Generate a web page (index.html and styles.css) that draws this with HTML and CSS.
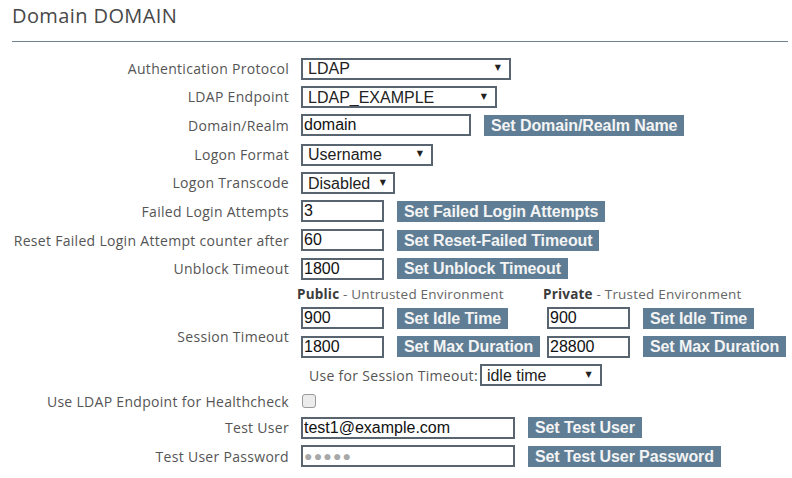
FILE: index.html
```html
<!DOCTYPE html>
<html lang="en">

<head>
    <meta charset="UTF-8">
    <title>Domain DOMAIN</title>
    <link rel="stylesheet" href="styles.css">
</head>

<body>
    <div class="page">
        <h1 class="title">Domain DOMAIN</h1>
        <hr class="rule">

        <form class="form" action="#" method="post">
            <label class="lbl" for="auth-protocol">Authentication Protocol</label>
            <div class="ctl">
                <span class="sel w-auth"><select id="auth-protocol"><option>LDAP</option></select></span>
            </div>

            <label class="lbl" for="ldap-endpoint">LDAP Endpoint</label>
            <div class="ctl">
                <span class="sel w-endpoint"><select id="ldap-endpoint"><option>LDAP_EXAMPLE</option></select></span>
            </div>

            <label class="lbl" for="realm">Domain/Realm</label>
            <div class="ctl">
                <input type="text" id="realm" class="txt w-realm" value="domain">
                <button type="button" class="btn">Set Domain/Realm Name</button>
            </div>

            <label class="lbl" for="logon-format">Logon Format</label>
            <div class="ctl">
                <span class="sel w-format"><select id="logon-format"><option>Username</option></select></span>
            </div>

            <label class="lbl" for="logon-transcode">Logon Transcode</label>
            <div class="ctl">
                <span class="sel w-transcode"><select id="logon-transcode"><option>Disabled</option></select></span>
            </div>

            <label class="lbl" for="failed-attempts">Failed Login Attempts</label>
            <div class="ctl">
                <input type="text" id="failed-attempts" class="txt w-num" value="3">
                <button type="button" class="btn">Set Failed Login Attempts</button>
            </div>

            <label class="lbl" for="reset-after">Reset Failed Login Attempt counter after</label>
            <div class="ctl">
                <input type="text" id="reset-after" class="txt w-num" value="60">
                <button type="button" class="btn">Set Reset-Failed Timeout</button>
            </div>

            <label class="lbl" for="unblock">Unblock Timeout</label>
            <div class="ctl">
                <input type="text" id="unblock" class="txt w-num" value="1800">
                <button type="button" class="btn">Set Unblock Timeout</button>
            </div>

            <div class="lbl">Session Timeout</div>
            <div class="session">
                <div class="env env-public"><strong>Public</strong> - Untrusted Environment</div>
                <div class="env env-private"><strong>Private</strong> - Trusted Environment</div>

                <input type="text" class="txt w-num" value="900">
                <button type="button" class="btn">Set Idle Time</button>
                <input type="text" class="txt w-num" value="900">
                <button type="button" class="btn">Set Idle Time</button>

                <input type="text" class="txt w-num" value="1800">
                <button type="button" class="btn">Set Max Duration</button>
                <input type="text" class="txt w-num" value="28800">
                <button type="button" class="btn">Set Max Duration</button>

                <div class="use-for">
                    <label for="use-for">Use for Session Timeout:</label>
                    <span class="sel w-usefor"><select id="use-for"><option>idle time</option></select></span>
                </div>
            </div>

            <label class="lbl lbl-short" for="healthcheck">Use LDAP Endpoint for Healthcheck</label>
            <div class="ctl ctl-short">
                <input type="checkbox" id="healthcheck" class="chk">
            </div>

            <label class="lbl" for="test-user">Test User</label>
            <div class="ctl">
                <input type="text" id="test-user" class="txt w-user" value="test1@example.com">
                <button type="button" class="btn">Set Test User</button>
            </div>

            <label class="lbl" for="test-pass">Test User Password</label>
            <div class="ctl">
                <input type="password" id="test-pass" class="txt w-user pass" placeholder="●●●●●">
                <button type="button" class="btn">Set Test User Password</button>
            </div>
        </form>
    </div>
</body>

</html>
```

FILE: styles.css
```css
body {
    margin: 0;
    padding: 0;
    background-color: #ffffff;
    font-family: "Open Sans", "Noto Sans", sans-serif;
    color: #555555;
}

.page {
    width: 792px;
}

.title {
    margin: 5px 0 0 12px;
    font-size: 20px;
    letter-spacing: 0.4px;
    line-height: 22px;
    font-weight: normal;
    color: #484848;
}

.rule {
    margin: 14px 4px 0 12px;
    border: none;
    border-top: 1px solid #6f8294;
    height: 0;
}

.form {
    display: grid;
    grid-template-columns: 289px 1fr;
    column-gap: 12px;
    row-gap: 6.7px;
    margin-top: 15px;
}

.lbl {
    display: flex;
    align-items: center;
    justify-content: flex-end;
    height: 22px;
    font-size: 14px;
    letter-spacing: 0.3px;
    color: #555555;
    white-space: nowrap;
    align-self: center;
}

.ctl {
    display: flex;
    align-items: center;
    gap: 13px;
    height: 22px;
}

.lbl-short,
.ctl-short {
    height: 17px;
}

/* text inputs */
.txt {
    box-sizing: border-box;
    height: 22px;
    margin: 0;
    padding: 0 0 0 1px;
    border: 2px solid #58646f;
    font-family: "Liberation Sans", Arial, sans-serif;
    font-size: 16px;
    color: #111111;
    background: #ffffff;
}

.w-num {
    width: 83px;
}

.w-realm {
    width: 170px;
}

.w-user {
    width: 214px;
}

.pass::placeholder {
    color: #a8a8a8;
    font-size: 14px;
    letter-spacing: 1.2px;
}

/* selects */
.sel {
    position: relative;
    display: inline-block;
    height: 22px;
}

.sel select {
    box-sizing: border-box;
    width: 100%;
    height: 22px;
    margin: 0;
    padding: 0 0 0 5px;
    border: 2px solid #58646f;
    border-radius: 0;
    appearance: none;
    -webkit-appearance: none;
    background: #ffffff;
    font-family: "Liberation Sans", Arial, sans-serif;
    font-size: 16px;
    color: #222222;
}

.sel::after {
    content: "\25BC";
    position: absolute;
    right: 10px;
    top: 6px;
    font-family: "DejaVu Sans", sans-serif;
    font-size: 8px;
    line-height: 10px;
    color: #222222;
    pointer-events: none;
}

.w-auth {
    width: 210px;
}

.w-endpoint {
    width: 196px;
}

.w-format {
    width: 132px;
}

.w-transcode {
    width: 94px;
}

.w-transcode::after {
    right: 9px;
}

.w-usefor {
    width: 122px;
}

/* buttons */
.btn {
    height: 21px;
    margin: 0;
    padding: 0 7px;
    border: none;
    background-color: #5f7e95;
    color: #f4f4f4;
    font-family: "Liberation Sans", Arial, sans-serif;
    font-size: 16px;
    font-weight: bold;
    letter-spacing: -0.1px;
    line-height: 21px;
    white-space: nowrap;
    cursor: pointer;
}

/* session timeout block */
.session {
    display: grid;
    grid-template-columns: 96px 150px 96px auto;
    grid-template-rows: 14px 22px 22px 22px;
    row-gap: 6.6px;
    align-items: center;
    justify-items: start;
}

.env {
    margin-left: -4px;
    font-size: 13.5px;
    letter-spacing: 0.2px;
    line-height: 14px;
    color: #666666;
    white-space: nowrap;
}

.env strong {
    color: #3c3c3c;
}

.env-public {
    grid-column: 1 / 3;
}

.env-private {
    grid-column: 3 / 5;
}

.use-for {
    grid-column: 1 / 5;
    display: flex;
    align-items: center;
    gap: 2px;
    padding-left: 8px;
    font-size: 14px;
    letter-spacing: 0.3px;
    color: #555555;
}

/* checkbox */
.chk {
    appearance: none;
    -webkit-appearance: none;
    width: 14px;
    height: 14px;
    margin: 0 0 0 1px;
    border: 1px solid #9a9a9a;
    border-radius: 3px;
    background: #ececec;
}
```
